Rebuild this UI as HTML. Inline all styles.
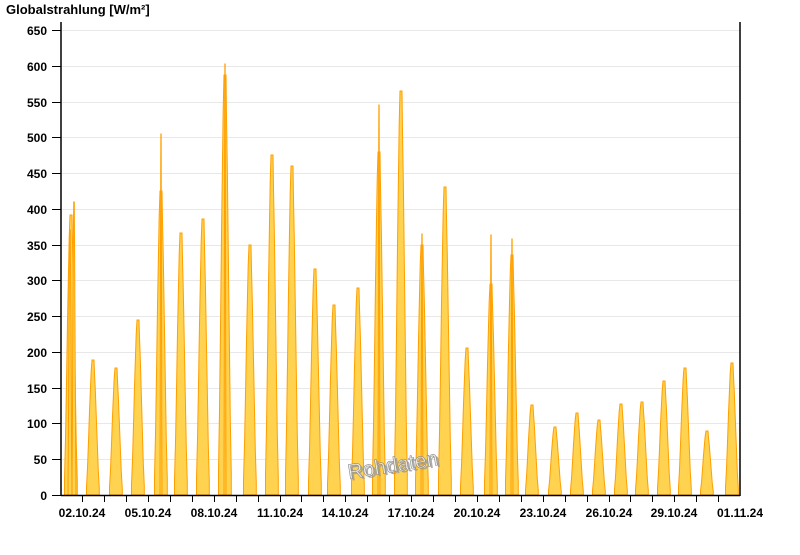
<!DOCTYPE html>
<html><head><meta charset="utf-8"><style>
body{margin:0;background:#fff;width:800px;height:550px;overflow:hidden}
svg text{font-family:"Liberation Sans",sans-serif;font-weight:bold}
</style></head><body>
<svg width="800" height="550" xmlns="http://www.w3.org/2000/svg">
<defs>
<path id="pk" d="M-6.5 0 L-6.5 -0.06 L-5.5 -0.2 L-4.5 -0.4 L-3.5 -0.62 L-2.5 -0.8 L-1.8 -0.92 L-1 -1 L1 -1 L1.5 -0.9 L2.3 -0.78 L3.3 -0.58 L4.3 -0.38 L5.3 -0.18 L6.3 -0.05 L6.3 0 Z" fill="#ffd24f" stroke="#ff9f00" stroke-width="1" vector-effect="non-scaling-stroke"/>
</defs>
<text x="6" y="14" font-size="13">Globalstrahlung [W/m²]</text>
<g stroke="#e8e8e8" stroke-width="1">
<line x1="62" x2="740" y1="30.5" y2="30.5"/><line x1="62" x2="740" y1="66.5" y2="66.5"/><line x1="62" x2="740" y1="102.5" y2="102.5"/><line x1="62" x2="740" y1="137.5" y2="137.5"/><line x1="62" x2="740" y1="173.5" y2="173.5"/><line x1="62" x2="740" y1="209.5" y2="209.5"/><line x1="62" x2="740" y1="245.5" y2="245.5"/><line x1="62" x2="740" y1="280.5" y2="280.5"/><line x1="62" x2="740" y1="316.5" y2="316.5"/><line x1="62" x2="740" y1="352.5" y2="352.5"/><line x1="62" x2="740" y1="388.5" y2="388.5"/><line x1="62" x2="740" y1="423.5" y2="423.5"/><line x1="62" x2="740" y1="459.5" y2="459.5"/>
</g>
<g>
<use href="#pk" transform="translate(71,495) scale(1,280)"/>
<use href="#pk" transform="translate(70,495) scale(0.3,265)"/>
<use href="#pk" transform="translate(74,495) scale(0.3,293)"/>
<use href="#pk" transform="translate(93,495) scale(1,135)"/>
<use href="#pk" transform="translate(116,495) scale(1,127)"/>
<use href="#pk" transform="translate(138,495) scale(1,175)"/>
<use href="#pk" transform="translate(161,495) scale(1,304)"/>
<use href="#pk" transform="translate(161,495) scale(0.15,361)"/>
<use href="#pk" transform="translate(181,495) scale(1,262)"/>
<use href="#pk" transform="translate(203,495) scale(1,276)"/>
<use href="#pk" transform="translate(225,495) scale(1,420)"/>
<use href="#pk" transform="translate(225,495) scale(0.15,431)"/>
<use href="#pk" transform="translate(250,495) scale(1,250)"/>
<use href="#pk" transform="translate(272,495) scale(1,340)"/>
<use href="#pk" transform="translate(292,495) scale(1,329)"/>
<use href="#pk" transform="translate(315,495) scale(1,226)"/>
<use href="#pk" transform="translate(334,495) scale(1,190)"/>
<use href="#pk" transform="translate(358,495) scale(1,207)"/>
<use href="#pk" transform="translate(379,495) scale(1,343)"/>
<use href="#pk" transform="translate(379,495) scale(0.15,390)"/>
<use href="#pk" transform="translate(401,495) scale(1,404)"/>
<use href="#pk" transform="translate(422,495) scale(1,250)"/>
<use href="#pk" transform="translate(422,495) scale(0.15,261)"/>
<use href="#pk" transform="translate(445,495) scale(1,308)"/>
<use href="#pk" transform="translate(467,495) scale(1,147)"/>
<use href="#pk" transform="translate(491,495) scale(1,211)"/>
<use href="#pk" transform="translate(491,495) scale(0.15,260)"/>
<use href="#pk" transform="translate(512,495) scale(1,240)"/>
<use href="#pk" transform="translate(512,495) scale(0.15,256)"/>
<use href="#pk" transform="translate(532,495) scale(1,90)"/>
<use href="#pk" transform="translate(555,495) scale(1,68)"/>
<use href="#pk" transform="translate(577,495) scale(1,82)"/>
<use href="#pk" transform="translate(599,495) scale(1,75)"/>
<use href="#pk" transform="translate(621,495) scale(1,91)"/>
<use href="#pk" transform="translate(642,495) scale(1,93)"/>
<use href="#pk" transform="translate(664,495) scale(1,114)"/>
<use href="#pk" transform="translate(685,495) scale(1,127)"/>
<use href="#pk" transform="translate(707,495) scale(1,64)"/>
<use href="#pk" transform="translate(732,495) scale(1,132)"/>
</g>
<g stroke="#000" stroke-width="1.5" fill="none">
<line x1="61" y1="22" x2="61" y2="496"/>
<line x1="740" y1="22" x2="740" y2="496"/>
<line x1="61" y1="495.5" x2="740" y2="495.5"/>
</g>
<g stroke="#000" stroke-width="1">
<line x1="52" x2="61" y1="30.5" y2="30.5"/><line x1="52" x2="61" y1="66.5" y2="66.5"/><line x1="52" x2="61" y1="102.5" y2="102.5"/><line x1="52" x2="61" y1="137.5" y2="137.5"/><line x1="52" x2="61" y1="173.5" y2="173.5"/><line x1="52" x2="61" y1="209.5" y2="209.5"/><line x1="52" x2="61" y1="245.5" y2="245.5"/><line x1="52" x2="61" y1="280.5" y2="280.5"/><line x1="52" x2="61" y1="316.5" y2="316.5"/><line x1="52" x2="61" y1="352.5" y2="352.5"/><line x1="52" x2="61" y1="388.5" y2="388.5"/><line x1="52" x2="61" y1="423.5" y2="423.5"/><line x1="52" x2="61" y1="459.5" y2="459.5"/><line x1="52" x2="61" y1="495.5" y2="495.5"/>
<line x1="82.5" x2="82.5" y1="495" y2="502"/><line x1="104.5" x2="104.5" y1="495" y2="502"/><line x1="126.5" x2="126.5" y1="495" y2="502"/><line x1="148.5" x2="148.5" y1="495" y2="502"/><line x1="170.5" x2="170.5" y1="495" y2="502"/><line x1="192.5" x2="192.5" y1="495" y2="502"/><line x1="214.5" x2="214.5" y1="495" y2="502"/><line x1="236.5" x2="236.5" y1="495" y2="502"/><line x1="258.5" x2="258.5" y1="495" y2="502"/><line x1="280.5" x2="280.5" y1="495" y2="502"/><line x1="301.5" x2="301.5" y1="495" y2="502"/><line x1="323.5" x2="323.5" y1="495" y2="502"/><line x1="345.5" x2="345.5" y1="495" y2="502"/><line x1="367.5" x2="367.5" y1="495" y2="502"/><line x1="389.5" x2="389.5" y1="495" y2="502"/><line x1="411.5" x2="411.5" y1="495" y2="502"/><line x1="433.5" x2="433.5" y1="495" y2="502"/><line x1="455.5" x2="455.5" y1="495" y2="502"/><line x1="477.5" x2="477.5" y1="495" y2="502"/><line x1="499.5" x2="499.5" y1="495" y2="502"/><line x1="521.5" x2="521.5" y1="495" y2="502"/><line x1="543.5" x2="543.5" y1="495" y2="502"/><line x1="565.5" x2="565.5" y1="495" y2="502"/><line x1="587.5" x2="587.5" y1="495" y2="502"/><line x1="609.5" x2="609.5" y1="495" y2="502"/><line x1="630.5" x2="630.5" y1="495" y2="502"/><line x1="652.5" x2="652.5" y1="495" y2="502"/><line x1="674.5" x2="674.5" y1="495" y2="502"/><line x1="696.5" x2="696.5" y1="495" y2="502"/><line x1="718.5" x2="718.5" y1="495" y2="502"/>
</g>
<g font-size="12" text-anchor="end">
<text x="47" y="35">650</text><text x="47" y="71">600</text><text x="47" y="107">550</text><text x="47" y="142">500</text><text x="47" y="178">450</text><text x="47" y="214">400</text><text x="47" y="250">350</text><text x="47" y="285">300</text><text x="47" y="321">250</text><text x="47" y="357">200</text><text x="47" y="393">150</text><text x="47" y="428">100</text><text x="47" y="464">50</text><text x="47" y="500">0</text>
</g>
<g font-size="12" text-anchor="middle">
<text x="82" y="517">02.10.24</text><text x="148" y="517">05.10.24</text><text x="214" y="517">08.10.24</text><text x="280" y="517">11.10.24</text><text x="345" y="517">14.10.24</text><text x="411" y="517">17.10.24</text><text x="477" y="517">20.10.24</text><text x="543" y="517">23.10.24</text><text x="609" y="517">26.10.24</text><text x="674" y="517">29.10.24</text><text x="740" y="517">01.11.24</text>
</g>
<text x="351" y="481" font-size="21" style="font-weight:normal" fill="#999" fill-opacity="0.8" transform="rotate(-9 350 480)">Rohdaten</text>
<text x="349" y="479" font-size="21" style="font-weight:normal" fill="#eee" fill-opacity="0.85" stroke="#888" stroke-width="0.6" transform="rotate(-9 350 480)">Rohdaten</text>
</svg>
</body></html>
